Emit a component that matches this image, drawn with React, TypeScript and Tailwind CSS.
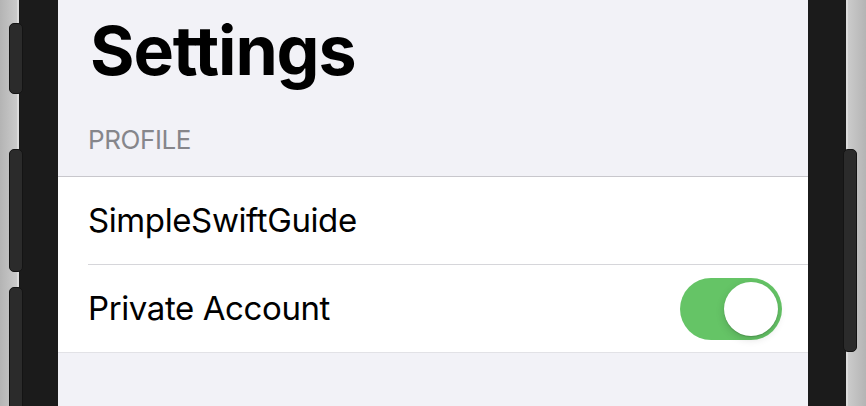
import React from "react";

function SideButton({ className }: { className: string }) {
  return (
    <div
      className={
        "absolute w-[14px] rounded-[5px] bg-[#2b2b2b] border border-[#141414] " + className
      }
    />
  );
}

export default function App() {
  return (
    <div
      className="relative flex w-[866px] h-[406px] overflow-hidden bg-[#1b1b1b]"
      style={{ fontFamily: "Inter, 'Noto Sans', sans-serif" }}
    >
      {/* left frame */}
      <div className="flex w-[58px] shrink-0">
        <div className="w-[17px] bg-gradient-to-r from-[#b4b4b4] to-[#cbcbcb]" />
        <div className="w-[2px] bg-[#dcdcdc]" />
        <div className="flex-1 bg-[#1b1b1b]" />
      </div>

      {/* screen */}
      <div className="flex-1 flex flex-col bg-[#f2f2f7]">
        <div className="pl-8 pt-[16px] h-[84px]">
          <div className="text-[68px] leading-none font-bold text-black tracking-[-1.1px]">
            Settings
          </div>
        </div>
        <div className="pl-[30px] pt-[43px] h-[92px]">
          <div className="text-[26px] leading-none text-[#86868b] tracking-[-0.4px]">PROFILE</div>
        </div>
        <div className="bg-white border-t border-[#c8c7cc] border-b border-b-[#e2e2e6]">
          <div className="flex items-center h-[87px] pl-[30px] text-[33px] leading-none text-black tracking-[-0.4px]">
            SimpleSwiftGuide
          </div>
          <div className="ml-[30px] h-px bg-[#d6d6da]" />
          <div className="flex items-center justify-between h-[87px] pl-[30px] pr-[26px] text-[33px] leading-none text-black tracking-[-0.4px]">
            <span>Private Account</span>
            <div className="flex items-center justify-end w-[102px] h-[62px] rounded-full bg-[#65c466] p-[4px]">
              <div className="w-[54px] h-[54px] rounded-full bg-white shadow-[0_3px_8px_rgba(0,0,0,0.15),0_1px_1px_rgba(0,0,0,0.16)]" />
            </div>
          </div>
        </div>
      </div>

      {/* right frame */}
      <div className="flex w-[58px] shrink-0">
        <div className="w-[38px] bg-[#1b1b1b]" />
        <div className="w-[2px] bg-[#dcdcdc]" />
        <div className="flex-1 bg-gradient-to-r from-[#cbcbcb] to-[#b4b4b4]" />
      </div>

      {/* side buttons */}
      <SideButton className="left-[9px] top-[23px] h-[71px]" />
      <SideButton className="left-[9px] top-[149px] h-[123px]" />
      <SideButton className="left-[9px] top-[287px] h-[140px]" />
      <SideButton className="left-[843px] top-[149px] h-[203px]" />
    </div>
  );
}
